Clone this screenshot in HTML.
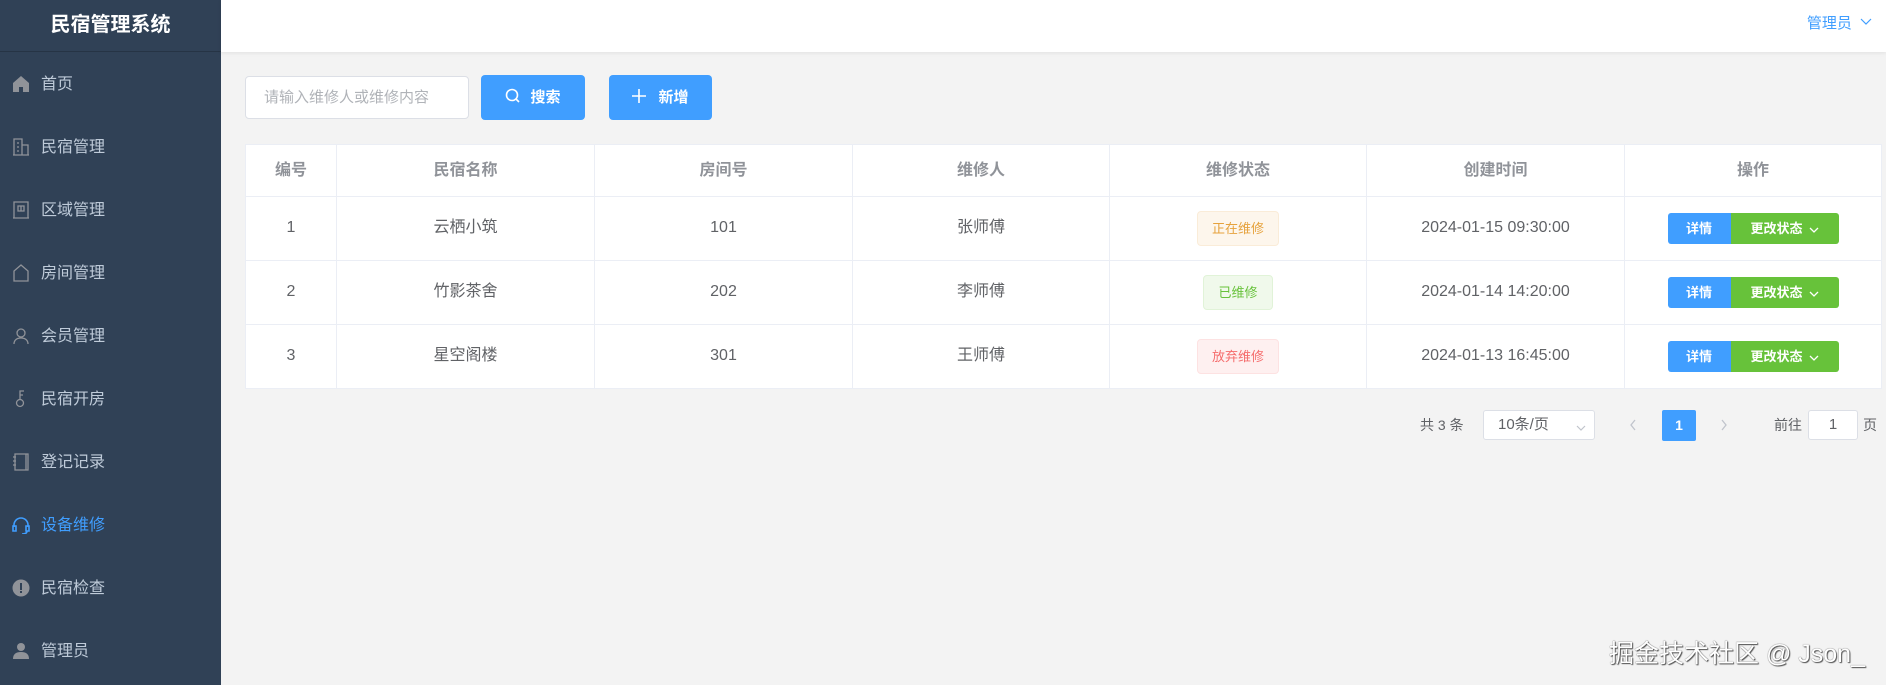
<!DOCTYPE html>
<html><head><meta charset="utf-8"><style>
*{margin:0;padding:0;box-sizing:border-box}
body{width:1886px;height:685px;overflow:hidden;background:#f3f3f3;font-family:"Liberation Sans","Noto Sans CJK SC",sans-serif;position:relative}
.side{position:absolute;left:0;top:0;width:221px;height:685px;background:#304156}
.logo{height:52px;border-bottom:1px solid #263445;color:#fff;font-weight:bold;font-size:20px;text-align:center;line-height:50px}
.mi{position:absolute;left:0;width:221px;height:63px;color:#bfcbd9;font-size:16px;line-height:63px;padding-left:41px}
.mi svg{position:absolute;left:12px;top:22px}
.mi.act{color:#409eff}
.top{position:absolute;left:221px;top:0;right:0;height:52px;background:#fff;box-shadow:0 1px 4px rgba(0,0,0,.08)}
.adm{position:absolute;right:14px;top:14px;color:#409eff;font-size:15px;line-height:20px}
.inp{position:absolute;left:245px;top:76px;width:224px;height:43px;border:1px solid #dcdfe6;border-radius:4px;background:#fff;color:#b0b3b8;font-size:15px;line-height:41px;padding-left:18px}
.btn{position:absolute;top:75px;height:45px;background:#409eff;border-radius:4px;color:#fff;font-size:15px;font-weight:bold;line-height:45px;text-align:center}
table{position:absolute;left:245px;top:144px;width:1637px;border-collapse:collapse;background:#fff;font-size:16px;color:#606266}
td,th{border:1px solid #ebeef5;text-align:center;vertical-align:middle;line-height:20px}
th{height:52px;color:#909399;font-weight:bold;font-size:16px}
td{height:64px}
td>span.v{display:inline-block;height:20px;line-height:20px;vertical-align:middle}
.tag{display:inline-block;height:35px;line-height:33px;padding:0 14px;border-radius:4px;font-size:13px;border:1px solid;vertical-align:middle}
.t1{background:#fdf6ec;border-color:#faecd8;color:#e6a23c}
.t2{background:#f0f9eb;border-color:#e1f3d8;color:#67c23a}
.t3{background:#fef0f0;border-color:#fde2e2;color:#f56c6c}
.ops{display:inline-flex;vertical-align:middle}
.b1{width:63px;height:31px;background:#409eff;color:#fff;font-size:13px;font-weight:bold;line-height:31px;border-radius:3px 0 0 3px}
.b2{width:108px;height:31px;background:#67c23a;color:#fff;font-size:13px;font-weight:bold;line-height:31px;border-radius:0 3px 3px 0}
.b2 svg{vertical-align:0;margin-left:6px}
.pg{position:absolute;top:410px;font-size:14px;color:#606266}
.wm{position:absolute;left:1609px;top:634px;font-size:25px;color:#fff;text-shadow:0 0 1px #333,1px 1px 1px #555}
</style></head><body>
<div class="side">
<div class="logo">民宿管理系统</div>
<div class="mi" style="top:53px"><svg width="18" height="18" viewBox="0 0 18 18"><path d="M1 8L9 1l8 7v9h-6v-5H7v5H1z" fill="#909399"/></svg>首页</div>
<div class="mi" style="top:116px"><svg width="18" height="18" viewBox="0 0 18 18" fill="none" stroke="#909399" stroke-width="1.3"><path d="M2 17V1h8v16M10 7h6v10M1 17h16M5 5h2M5 9h2M5 13h2"/></svg>民宿管理</div>
<div class="mi" style="top:179px"><svg width="18" height="18" viewBox="0 0 18 18" fill="none" stroke="#909399" stroke-width="1.3"><path d="M2 17V1h14v16zM6 5h6v5H6zM9 5v5M1 17h16"/></svg>区域管理</div>
<div class="mi" style="top:242px"><svg width="18" height="18" viewBox="0 0 18 18" fill="none" stroke="#909399" stroke-width="1.3"><path d="M2 17V7l7-6 7 6v10z"/></svg>房间管理</div>
<div class="mi" style="top:305px"><svg width="18" height="18" viewBox="0 0 18 18" fill="none" stroke="#909399" stroke-width="1.3"><circle cx="9" cy="6" r="4"/><path d="M2 17c0-4 3-6 7-6s7 2 7 6"/></svg>会员管理</div>
<div class="mi" style="top:368px"><svg width="18" height="18" viewBox="0 0 18 18" fill="none" stroke="#909399" stroke-width="1.3"><circle cx="8" cy="13" r="3.5"/><path d="M8 9.5V1h4M8 5h3"/></svg>民宿开房</div>
<div class="mi" style="top:431px"><svg width="18" height="18" viewBox="0 0 18 18" fill="none" stroke="#909399" stroke-width="1.3"><path d="M3 1h11v16H3zM14 1h2v16h-2M1 4h3M1 8h3M1 12h3"/></svg>登记记录</div>
<div class="mi act" style="top:494px"><svg width="18" height="18" viewBox="0 0 18 18" fill="none" stroke="#409eff" stroke-width="1.6"><path d="M2 11V9a7 7 0 0114 0v2M1 10h3v5H1zM14 10h3v5h-3zM15 15c0 2-2 3-5 3"/></svg>设备维修</div>
<div class="mi" style="top:557px"><svg width="18" height="18" viewBox="0 0 18 18"><circle cx="9" cy="9" r="8.5" fill="#909399"/><rect x="8" y="4" width="2" height="7" fill="#304156"/><rect x="8" y="12" width="2" height="2" fill="#304156"/></svg>民宿检查</div>
<div class="mi" style="top:620px"><svg width="18" height="18" viewBox="0 0 18 18"><circle cx="9" cy="5" r="4" fill="#909399"/><path d="M1 17c0-5 3-7 8-7s8 2 8 7z" fill="#909399"/></svg>管理员</div>
</div>
<div class="top"><div class="adm">管理员 <svg width="12" height="8" viewBox="0 0 12 8" style="margin-left:4px;vertical-align:2px" fill="none" stroke="#409eff" stroke-width="1.2"><path d="M1 1l5 5 5-5"/></svg></div></div>
<div class="inp">请输入维修人或维修内容</div>
<div class="btn" style="left:481px;width:104px"><svg width="16" height="16" viewBox="0 0 16 16" style="vertical-align:-2px;margin-right:9px" fill="none" stroke="#fff" stroke-width="1.6"><circle cx="7" cy="7" r="5.5"/><path d="M11 11l3 3"/></svg>搜索</div>
<div class="btn" style="left:609px;width:103px"><svg width="14" height="14" viewBox="0 0 14 14" style="vertical-align:-1px;margin-right:12px" stroke="#fff" stroke-width="1.6"><path d="M7 0v14M0 7h14"/></svg>新增</div>
<table>
<tr><th style="width:91px">编号</th><th style="width:258px">民宿名称</th><th style="width:258px">房间号</th><th style="width:257px">维修人</th><th style="width:257px">维修状态</th><th style="width:258px">创建时间</th><th>操作</th></tr>
<tr><td><span class="v">1</span></td><td><span class="v">云栖小筑</span></td><td><span class="v">101</span></td><td><span class="v">张师傅</span></td><td><span class="tag t1">正在维修</span></td><td><span class="v">2024-01-15 09:30:00</span></td><td><div class="ops"><div class="b1">详情</div><div class="b2">更改状态<svg width="10" height="6" viewBox="0 0 10 6" fill="none" stroke="#fff" stroke-width="1.3"><path d="M1 1l4 4 4-4"/></svg></div></div></td></tr>
<tr><td><span class="v">2</span></td><td><span class="v">竹影茶舍</span></td><td><span class="v">202</span></td><td><span class="v">李师傅</span></td><td><span class="tag t2">已维修</span></td><td><span class="v">2024-01-14 14:20:00</span></td><td><div class="ops"><div class="b1">详情</div><div class="b2">更改状态<svg width="10" height="6" viewBox="0 0 10 6" fill="none" stroke="#fff" stroke-width="1.3"><path d="M1 1l4 4 4-4"/></svg></div></div></td></tr>
<tr><td><span class="v">3</span></td><td><span class="v">星空阁楼</span></td><td><span class="v">301</span></td><td><span class="v">王师傅</span></td><td><span class="tag t3">放弃维修</span></td><td><span class="v">2024-01-13 16:45:00</span></td><td><div class="ops"><div class="b1">详情</div><div class="b2">更改状态<svg width="10" height="6" viewBox="0 0 10 6" fill="none" stroke="#fff" stroke-width="1.3"><path d="M1 1l4 4 4-4"/></svg></div></div></td></tr>
</table>
<div class="pg" style="left:1420px;line-height:30px">共 3 条</div>
<div class="pg" style="left:1483px;width:112px;height:30px;border:1px solid #dcdfe6;border-radius:3px;background:#fff;line-height:28px;padding-left:14px;font-size:15px">10条/页<svg width="10" height="6" viewBox="0 0 10 6" style="position:absolute;right:8px;top:14px" fill="none" stroke="#c0c4cc" stroke-width="1.2"><path d="M1 1l4 4 4-4"/></svg></div>
<svg class="pg" style="left:1629px;top:419px" width="8" height="12" viewBox="0 0 8 12" fill="none" stroke="#c0c4cc" stroke-width="1.3"><path d="M6 1L2 6l4 5"/></svg>
<div class="pg" style="left:1662px;width:34px;height:31px;background:#409eff;color:#fff;font-weight:bold;text-align:center;line-height:31px;border-radius:2px">1</div>
<svg class="pg" style="left:1720px;top:419px" width="8" height="12" viewBox="0 0 8 12" fill="none" stroke="#c0c4cc" stroke-width="1.3"><path d="M2 1l4 5-4 5"/></svg>
<div class="pg" style="left:1774px;line-height:30px">前往</div>
<div class="pg" style="left:1808px;width:50px;height:30px;border:1px solid #dcdfe6;border-radius:3px;background:#fff;text-align:center;line-height:28px;font-size:15px">1</div>
<div class="pg" style="left:1863px;line-height:30px">页</div>
<div class="wm">掘金技术社区 @ Json_</div>
</body></html>
